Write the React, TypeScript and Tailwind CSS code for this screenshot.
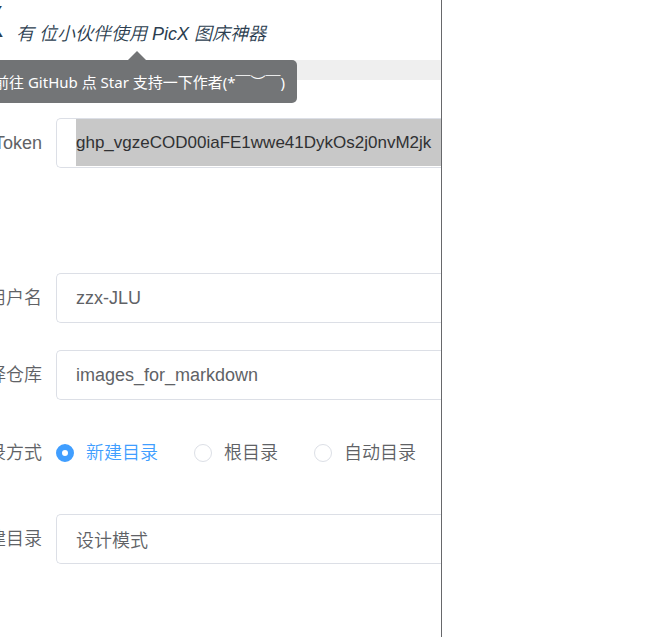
import { useState } from 'react';
import type { ReactNode } from 'react';

const inputStyle =
  'h-[50px] w-full rounded-l-[5px] border border-r-0 border-[#dcdfe6] bg-white pl-[19px] text-lg font-[350] text-[#606266] outline-none';

const labelStyle =
  'flex w-[42px] shrink-0 justify-end overflow-hidden whitespace-nowrap text-lg font-[350] text-[#606266]';

function Field({ id, label, children }: { id: string; label: string; children: ReactNode }) {
  return (
    <div className="flex h-[50px] items-center gap-[14px]">
      <label htmlFor={id} className={labelStyle}>
        {label}
      </label>
      <div className="min-w-0 flex-1">{children}</div>
    </div>
  );
}

function Header() {
  return (
    <header className="relative h-20 border-b-[20px] border-[#efefef] text-[#2c3e50]">
      <div className="flex h-[60px] items-center gap-[13px]">
        <h1 className="flex w-[3px] shrink-0 justify-end pb-4 text-[44px] leading-none font-bold">X</h1>
        <p className="pt-2 text-lg font-[350] whitespace-nowrap italic">有 位小伙伴使用 PicX 图床神器</p>
      </div>
      <div
        role="tooltip"
        className="absolute top-[60px] left-0 flex h-[43px] w-[297px] items-center justify-end rounded-r-[5px] bg-[#606264]/88 pt-0.5 pr-3 font-['Noto_Sans','Noto_Sans_CJK_SC',sans-serif] text-[15px] whitespace-nowrap text-white"
      >
        <span className="absolute -top-[9px] left-[128px] h-[9px] w-[18px] bg-[#737476] [clip-path:polygon(50%_0,100%_100%,0_100%)]" />
        前往 GitHub 点 Star 支持一下作者(*￣︶￣)
      </div>
    </header>
  );
}

const modes = ['新建目录', '根目录', '自动目录'];

export default function App() {
  const [token, setToken] = useState('ghp_vgzeCOD00iaFE1wwe41DykOs2j0nvM2jk');
  const [user, setUser] = useState('zzx-JLU');
  const [repo, setRepo] = useState('images_for_markdown');
  const [dir, setDir] = useState('设计模式');
  const [mode, setMode] = useState(modes[0]);

  return (
    <div className="grid min-h-screen grid-cols-[199fr_100fr] bg-white font-['Liberation_Sans','Noto_Sans_CJK_SC',sans-serif]">
      <main className="min-w-0 overflow-hidden border-r border-[#67686b]">
        <Header />
        <form className="flex flex-col pt-[38px]">
          <Field id="token" label="Token">
            <div className="h-[50px] rounded-l-[5px] border border-r-0 border-[#dcdfe6] pb-px pl-[19px]">
              <input
                id="token"
                className="block h-full w-full bg-[#c8c8c8] text-[17px] text-[#303133] outline-none"
                value={token}
                onChange={(e) => setToken(e.target.value)}
              />
            </div>
          </Field>
          <div className="mt-[105px] flex flex-col gap-[27px]">
            <Field id="user" label="用户名">
              <input id="user" className={inputStyle} value={user} onChange={(e) => setUser(e.target.value)} />
            </Field>
            <Field id="repo" label="择仓库">
              <input id="repo" className={inputStyle} value={repo} onChange={(e) => setRepo(e.target.value)} />
            </Field>
            <div role="radiogroup" aria-labelledby="mode" className="flex h-[50px] items-center gap-[14px] pt-0.5">
              <span id="mode" className={labelStyle}>
                录方式
              </span>
              <div className="flex gap-9">
                {modes.map((m) => (
                  <label
                    key={m}
                    className="flex items-center gap-3 text-lg font-[350] whitespace-nowrap text-[#606266] has-checked:text-[#409eff]"
                  >
                    <input
                      type="radio"
                      name="mode"
                      checked={mode === m}
                      onChange={() => setMode(m)}
                      className="size-[18px] appearance-none rounded-full border border-[#dcdfe6] bg-white checked:border-[6px] checked:border-[#409eff]"
                    />
                    {m}
                  </label>
                ))}
              </div>
            </div>
          </div>
          <div className="mt-[37px]">
            <Field id="dir" label="建目录">
              <input id="dir" className={inputStyle} value={dir} onChange={(e) => setDir(e.target.value)} />
            </Field>
          </div>
        </form>
      </main>
      <aside />
    </div>
  );
}
